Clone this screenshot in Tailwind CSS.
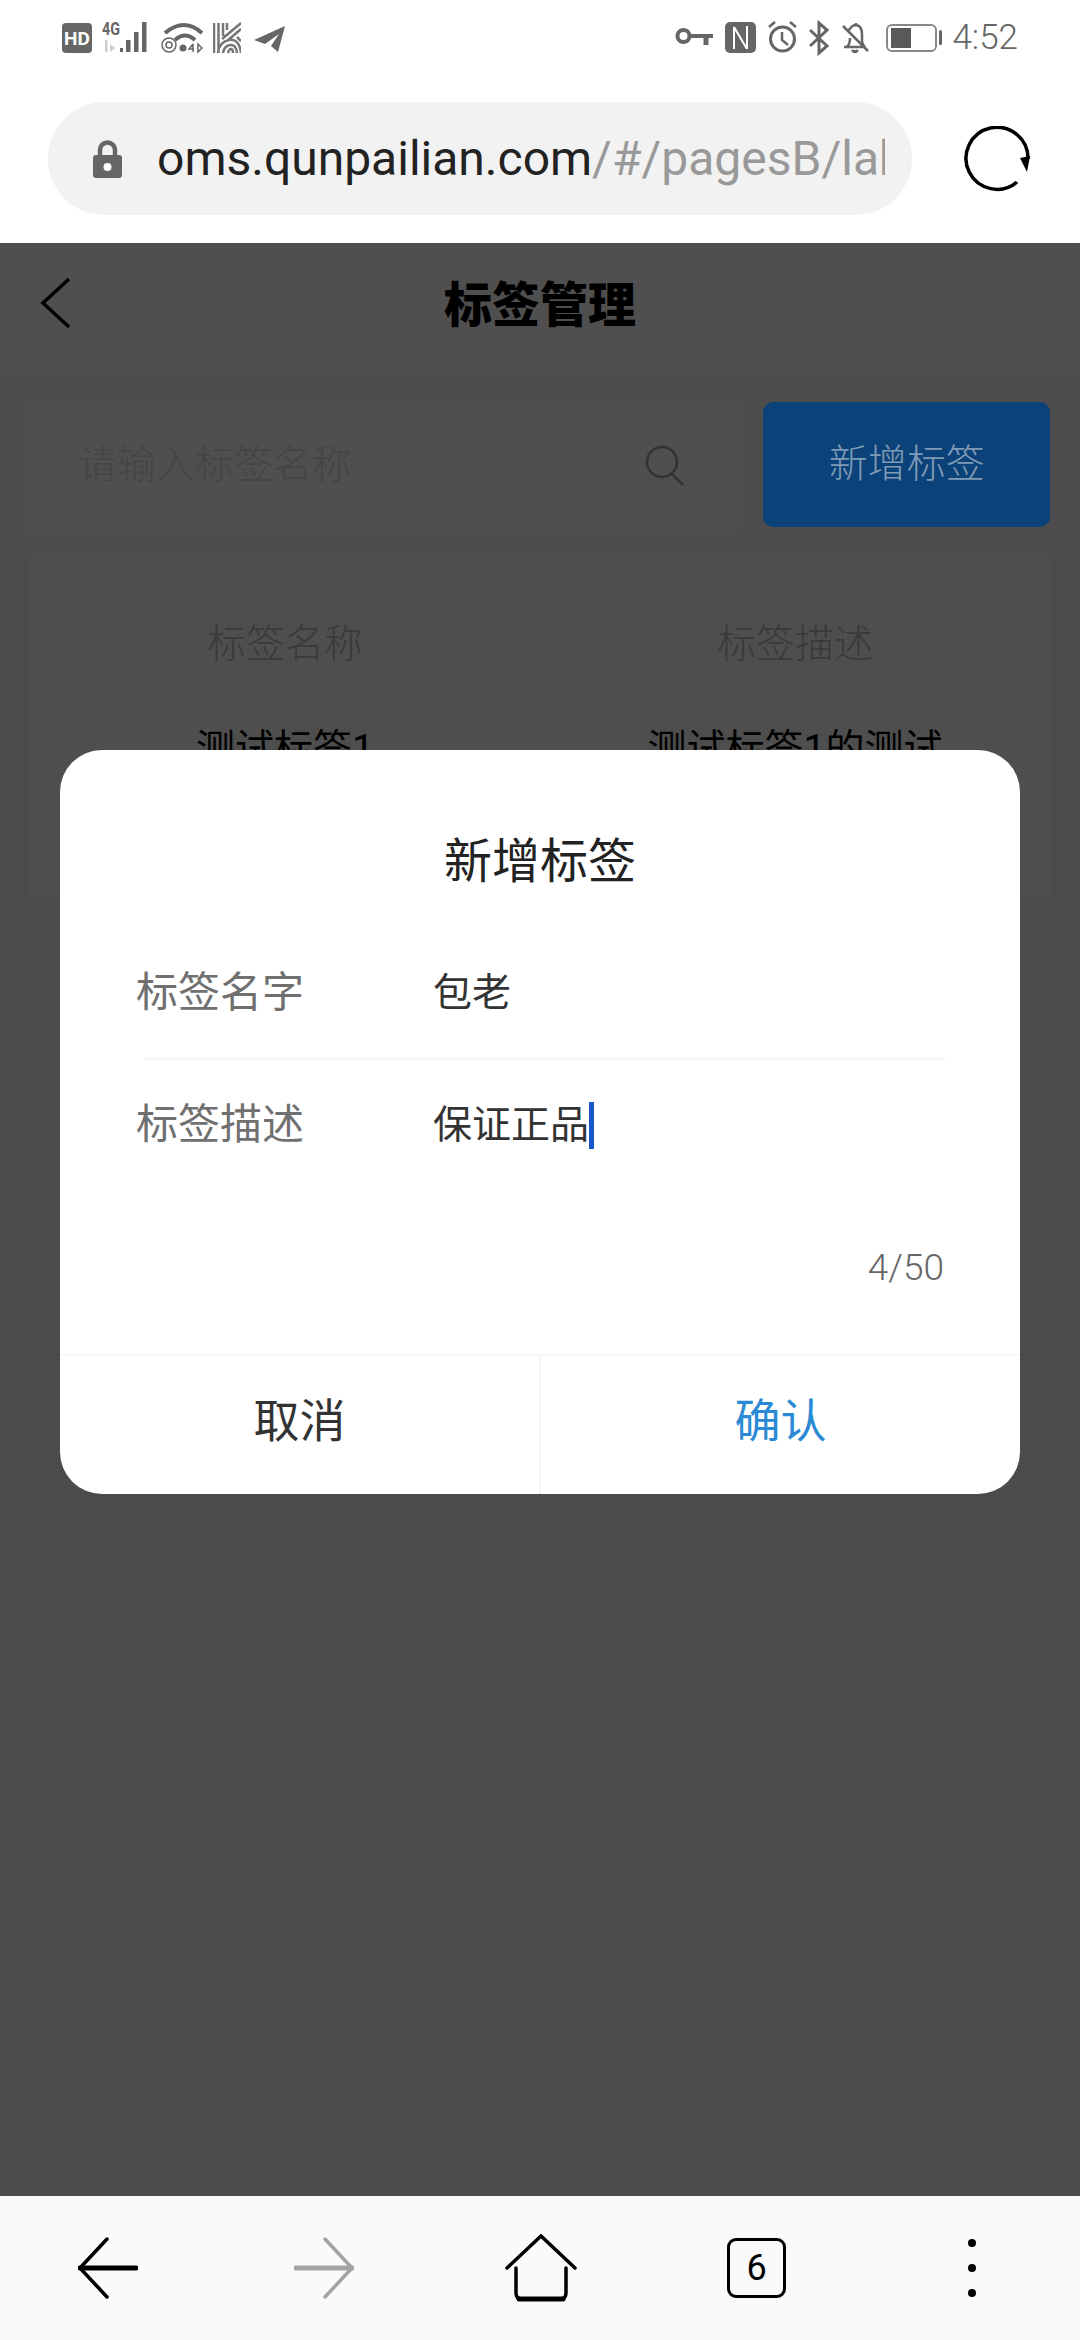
<!DOCTYPE html>
<html lang="zh-CN">
<head>
<meta charset="UTF-8">
<meta name="viewport" content="width=device-width, initial-scale=1.0">
<title>标签管理</title>
<script src="https://cdn.jsdelivr.net/npm/@tailwindcss/browser@4"></script>
</head>
<body class="font-['Roboto','Noto_Sans_CJK_SC',sans-serif]">
<div class="relative flex flex-col w-[1080px] h-[2340px] overflow-hidden bg-white">

  <!-- status bar -->
  <div class="flex justify-between items-center h-[76px] shrink-0 pl-[62px] pr-[62px] text-[#666]">
    <div class="flex items-center">
      <svg class="w-[30px] h-[36px]" viewBox="0 0 30 36"><rect y="3" width="30" height="30" rx="4" fill="#666"/><text x="15" y="24.500" text-anchor="middle" font-size="19" font-weight="700" fill="#fff">HD</text></svg>
      <svg class="ml-[10px] w-[50px] h-[36px] overflow-visible" viewBox="0 0 50 36" fill="#666">
        <text x="0" y="15" font-size="18" font-weight="700" textLength="18" lengthAdjust="spacingAndGlyphs">4G</text>
        <path d="M3 20h2.500v12H3zM8 24l5 4-5 4z" fill="#ccc"/>
        <rect x="18" y="28" width="3" height="4"/><rect x="24" y="20" width="4.500" height="12"/><rect x="32" y="12" width="4.500" height="20"/><rect x="40" y="2" width="4.500" height="30"/>
      </svg>
      <svg class="ml-[8px] w-[43px] h-[36px]" viewBox="0 0 43 36" fill="none" stroke="#666">
        <path d="M5 13Q24-3 42 13" stroke-width="4"/><path d="M15 20Q25 11 35 20" stroke-width="4"/>
        <circle cx="9" cy="25" r="7" stroke-width="1.500"/><circle cx="9" cy="25" r="3" stroke-width="1.500"/>
        <circle cx="23" cy="28" r="3.500" fill="#666" stroke="none"/>
        <path d="M33 24l-4 5h5M33 24v8M38 24v8l4-4z" stroke-width="1.500"/>
      </svg>
      <svg class="ml-[10px] w-[28px] h-[36px]" viewBox="0 0 28 36" fill="none" stroke="#777" stroke-width="2.500">
        <path d="M1 3v30M5.500 3v30M10 3v13M14 3v7M28 3L9 19M28 9L14 21M5 33Q6 22 16 20T28 33M10 33Q11 26 17 25T24 33M15 33Q16 29 18 29T20 33M24 17L28 21"/>
      </svg>
      <svg class="ml-[13px] w-[31px] h-[36px]" viewBox="0 0 31 36"><path d="M31 6L0 20l11 4 14-10-8 12 7 6z" fill="#666"/></svg>
    </div>
    <div class="flex items-center">
      <svg class="w-[38px] h-[36px]" viewBox="0 0 38 36" fill="none" stroke="#666"><circle cx="8.500" cy="16" r="6" stroke-width="4"/><path d="M14 16h24" stroke-width="4"/><path d="M31 16v9" stroke-width="5"/></svg>
      <svg class="ml-[12px] w-[31px] h-[36px]" viewBox="0 0 31 36"><rect y="2" width="31" height="31" rx="5" fill="#666"/><path d="M9 7v22M9 7l13 22M22 6v23" fill="none" stroke="#fff" stroke-width="2"/></svg>
      <svg class="ml-[12px] w-[29px] h-[36px]" viewBox="0 0 29 36" fill="none" stroke="#666" stroke-width="3"><circle cx="14.500" cy="19" r="12"/><path d="M14 12v8l6 5" stroke-width="2.500"/><path d="M1 7l6-5M28 7l-6-5" stroke-width="2.500"/></svg>
      <svg class="ml-[12px] w-[20px] h-[36px]" viewBox="0 0 20 36" fill="none" stroke="#666" stroke-width="3"><path d="M1 10l17 16-8 7V3l8 7L1 26"/></svg>
      <svg class="ml-[13px] w-[27px] h-[36px]" viewBox="0 0 27 36" fill="none" stroke="#666" stroke-width="2.500"><path d="M2 27h20M5 27q3-3 3-9M7 10q3-5 7-5v-2M14 5q6 1 6 9v7q0 3 3 6M1 6l25 25"/><path d="M10 30q3 4 6 0" fill="#666"/></svg>
      <svg class="ml-[17px] w-[56px] h-[36px]" viewBox="0 0 56 36"><rect x="1" y="5" width="49" height="26" rx="5" fill="none" stroke="#888" stroke-width="2"/><rect x="5" y="8" width="20" height="20" fill="#595959"/><rect x="53" y="10" width="3" height="15" rx="1.500" fill="#666"/></svg>
      <span class="ml-[10px] text-[35px] leading-[36px] font-light">4:52</span>
    </div>
  </div>

  <!-- browser address row -->
  <div class="flex items-start h-[167px] shrink-0 pt-[26px] pl-[48px]">
    <div class="flex items-center w-[864px] h-[113px] rounded-full bg-[#f2f2f2] pl-[45px] pr-[27px]">
      <svg class="w-[29px] h-[38px] shrink-0" viewBox="0 0 29 38"><path d="M7 16V10a7.500 7.500 0 0 1 15 0v6" fill="none" stroke="#666" stroke-width="4.500"/><rect y="15" width="29" height="23" rx="3" fill="#666"/><circle cx="14.500" cy="27" r="4" fill="#fff"/></svg>
      <div class="ml-[35px] overflow-hidden whitespace-nowrap text-[48px] leading-[60px]"><span class="text-[#222]">oms.qunpailian.com</span><span class="text-[#999]">/#/pagesB/label/index</span></div>
    </div>
    <svg class="ml-[52px] mt-[24px] w-[66px] h-[66px]" viewBox="0 0 66 66" fill="none"><path d="M53 56A31 31 0 1 1 64 33" stroke="#000" stroke-width="3.500"/><path d="M56 32l10-2-3 16z" fill="#000"/></svg>
  </div>

  <!-- dimmed page -->
  <div class="flex flex-col flex-1 bg-[#4b4b4b]">
    <div class="relative flex items-center justify-center h-[126px] bg-[#4f4f4f]">
      <svg class="absolute left-[40px] top-[34px] w-[32px] h-[52px]" viewBox="0 0 32 52" fill="none"><path d="M29 2L3 26l26 24" stroke="#000" stroke-width="3.500"/></svg>
      <h1 class="text-[48px] leading-[64px] font-black text-black">标签管理</h1>
    </div>
    <div class="flex px-[30px] pt-[33px] pb-[28px] bg-[#4d4d4d]">
      <div class="flex items-center justify-between w-[710px] h-[127px] pl-[48px] pr-[49px] bg-[#4f4f4f]">
        <span class="text-[39px] font-light text-[#454545]">请输入标签名称</span>
        <svg class="w-[44px] h-[44px]" viewBox="0 0 44 44" fill="none" stroke="#333" stroke-width="2.500"><circle cx="18" cy="18" r="15"/><path d="M28 30l11 11"/></svg>
      </div>
      <div class="flex items-center justify-center w-[288px] h-[125px] ml-[26px] rounded-[10px] bg-[#0b4279] text-[39px] font-light text-[#7f9ab5]">新增标签</div>
    </div>
    <div class="mx-[30px] h-[338px] bg-[#4e4e4e] text-center">
      <div class="grid grid-cols-2 pt-[57px] text-[39px] leading-[60px] font-light text-[#3a3a3a]"><span>标签名称</span><span>标签描述</span></div>
      <div class="grid grid-cols-2 pt-[50px] text-[39px] leading-[50px] text-black"><span>测试标签1</span><span>测试标签1的测试</span></div>
    </div>
  </div>

  <!-- browser toolbar -->
  <div class="flex items-center h-[144px] shrink-0 bg-[#fafafa]">
    <svg class="ml-[78px] w-[60px] h-[62px]" viewBox="0 0 60 62" fill="none" stroke="#000" stroke-linecap="round"><path d="M29 2L2 31l27 29" stroke-width="3.500"/><path d="M2 31h56" stroke-width="5"/></svg>
    <svg class="ml-[156px] w-[60px] h-[62px]" viewBox="0 0 60 62" fill="none" stroke="#a3a3a3" stroke-linecap="round"><path d="M31 2l27 29-27 29" stroke-width="3.500"/><path d="M2 31h56" stroke-width="5"/></svg>
    <svg class="ml-[151px] w-[72px] h-[68px]" viewBox="0 0 72 68" fill="none" stroke="#000" stroke-width="3.500" stroke-linecap="round"><path d="M2 34L36 2l34 32"/><path d="M11 34v25q0 6 6 6h38q6 0 6-6V34"/><path d="M14 65h44" stroke-width="5"/></svg>
    <div class="flex items-center justify-center ml-[150px] w-[59px] h-[60px] rounded-[9px] border-[3.500px] border-black text-[36px] leading-none text-black">6</div>
    <div class="flex flex-col gap-[17px] ml-[182px]"><span class="block w-[8px] h-[8px] rounded-full bg-black"></span><span class="block w-[8px] h-[8px] rounded-full bg-black"></span><span class="block w-[8px] h-[8px] rounded-full bg-black"></span></div>
  </div>

  <!-- dialog -->
  <div class="absolute left-[60px] top-[750px] flex flex-col w-[960px] h-[744px] rounded-[42px] bg-white">
    <div class="h-[173px] pt-[76px] text-center text-[48px] leading-[72px] text-[#222]">新增标签</div>
    <div class="flex items-center h-[134px] pt-[6px] mx-[76px] text-[42px] text-[#707070]">
      <span class="w-[297px] leading-[60px]">标签名字</span><span class="text-[39px] text-[#333]">包老</span>
    </div>
    <div class="h-[3px] ml-[85px] mr-[75px] bg-[#f7f7f7]"></div>
    <div class="flex items-start h-[164px] mx-[76px] pt-[35px]">
      <span class="w-[297px] text-[42px] leading-[60px] text-[#707070]">标签描述</span>
      <span class="text-[39px] leading-[60px] text-[#333]">保证正品</span><span class="w-[5px] h-[47px] mt-[7px] bg-[#1a56cc]"></span>
    </div>
    <div class="h-[130px] pt-[22px] pr-[76px] text-right text-[37px] leading-[44px] font-light text-[#666]">4/50</div>
    <div class="flex flex-1 border-t-2 border-[#f7f7f7] text-[46px]">
      <div class="flex items-center justify-center w-[481px] pb-[8px] border-r-2 border-[#f5f5f5] text-[#333]">取消</div>
      <div class="flex items-center justify-center flex-1 pb-[8px] text-[#2a8ad6]">确认</div>
    </div>
  </div>
</div>
</body>
</html>
